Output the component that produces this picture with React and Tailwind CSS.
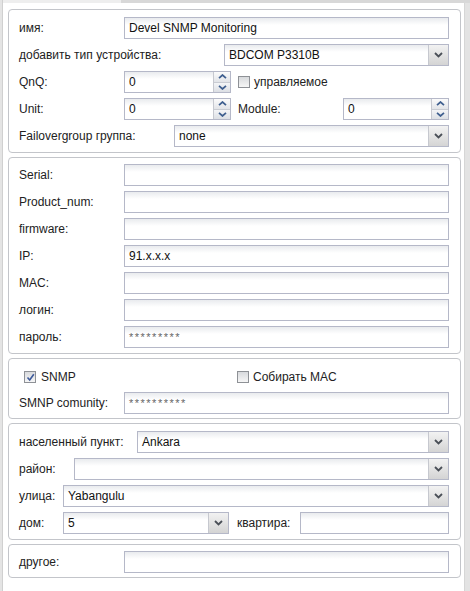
import React from "react";

const inputCls =
  "h-[22px] border border-[#b5b8c8] bg-[linear-gradient(#e9ebee,#ffffff_7px)] pl-[4px] flex items-center text-[12px] text-[#111] overflow-hidden whitespace-nowrap";

function TextBox({ value = "", className = "", pw = false }) {
  return (
    <div className={`${inputCls} ${className}`}>
      {pw ? <span className="text-[11px] tracking-[1.5px] text-[#666] leading-none">{value}</span> : value}
    </div>
  );
}

function Chevron() {
  return (
    <svg width="9" height="6" viewBox="0 0 9 6">
      <path d="M1 1 L4.5 4.5 L8 1" fill="none" stroke="#4a4f57" strokeWidth="1.8" />
    </svg>
  );
}

function Select({ value = "", className = "" }) {
  return (
    <div className={`h-[22px] border border-[#b5b8c8] flex ${className}`}>
      <div className="flex-1 bg-[linear-gradient(#e9ebee,#ffffff_7px)] pl-[4px] flex items-center text-[12px] text-[#111] whitespace-nowrap overflow-hidden">
        {value}
      </div>
      <div className="w-[20px] border-l border-[#c6c8cf] bg-[linear-gradient(#f2f2f2,#d4d4d4)] flex items-center justify-center">
        <Chevron />
      </div>
    </div>
  );
}

function Spinner({ value = "", className = "" }) {
  return (
    <div className={`h-[22px] border border-[#b5b8c8] flex ${className}`}>
      <div className="flex-1 bg-[linear-gradient(#e9ebee,#ffffff_7px)] pl-[4px] flex items-center text-[12px] text-[#111]">
        {value}
      </div>
      <div className="w-[17px] border-l border-[#c6c8cf] flex flex-col">
        <div className="flex-1 bg-[linear-gradient(#fbfbfb,#e2e4e8)] flex items-center justify-center border-b border-[#c9ccd3]">
          <svg width="9" height="5" viewBox="0 0 9 5">
            <path d="M1 4.2 L4.5 1 L8 4.2" fill="none" stroke="#3f5f8f" strokeWidth="1.7" />
          </svg>
        </div>
        <div className="flex-1 bg-[linear-gradient(#f4f5f7,#dcdfe4)] flex items-center justify-center">
          <svg width="9" height="5" viewBox="0 0 9 5">
            <path d="M1 0.8 L4.5 4 L8 0.8" fill="none" stroke="#3f5f8f" strokeWidth="1.7" />
          </svg>
        </div>
      </div>
    </div>
  );
}

function Check({ checked = false }) {
  return (
    <div className="w-[12px] h-[12px] border border-[#8e9196] bg-[linear-gradient(#d8dadd,#f6f6f6)] flex items-center justify-center">
      {checked && (
        <svg width="9" height="9" viewBox="0 0 9 9">
          <path d="M1.5 4.5 L3.7 7 L7.8 1.2" fill="none" stroke="#3d5a9a" strokeWidth="1.6" />
        </svg>
      )}
    </div>
  );
}

function Row({ children, className = "" }) {
  return <div className={`h-[22px] flex items-center ${className}`}>{children}</div>;
}

function Label({ children, w }) {
  return (
    <div className="shrink-0 whitespace-nowrap text-[12px] text-[#222]" style={{ width: w }}>
      {children}
    </div>
  );
}

function Box({ children, className = "" }) {
  return (
    <div className={`border border-[#c3c5ca] rounded-[4px] bg-white pl-[10px] pr-[11px] flex flex-col ${className}`}>
      {children}
    </div>
  );
}

export default function App() {
  return (
    <div
      className="w-[470px] h-[591px] bg-white relative overflow-hidden flex"
      style={{ fontFamily: '"Liberation Sans", Arial, sans-serif' }}
    >
      <div className="w-[3px] bg-[#e4e4e4] border-r border-[#d0d0d0] shrink-0" />
      <div className="flex-1 flex flex-col">
        <div className="h-[3px] flex shrink-0">
          <div className="w-[118px] bg-[#eeeeee]" />
          <div className="flex-1 bg-[#d8d8d8]" />
        </div>
        <div className="flex-1 flex">
          <div className="w-[5px]" />
          <div className="w-[453px] flex flex-col gap-[4px] pt-[6px]">
            <Box className="pt-[7px] pb-[5px] gap-[5px]">
              <Row>
                <Label w={105}>имя:</Label>
                <TextBox value="Devel SNMP Monitoring" className="flex-1" />
              </Row>
              <Row>
                <Label w={205}>добавить тип устройства:</Label>
                <Select value="BDCOM P3310B" className="flex-1" />
              </Row>
              <Row>
                <Label w={105}>QnQ:</Label>
                <Spinner value="0" className="w-[107px]" />
                <div className="ml-[7px]"><Check /></div>
                <span className="ml-[4px] text-[12px] text-[#222]">управляемое</span>
              </Row>
              <Row>
                <Label w={105}>Unit:</Label>
                <Spinner value="0" className="w-[107px]" />
                <div className="ml-[7px] w-[105px] text-[12px] text-[#222]">Module:</div>
                <Spinner value="0" className="flex-1" />
              </Row>
              <Row>
                <Label w={155}>Failovergroup группа:</Label>
                <Select value="none" className="flex-1" />
              </Row>
            </Box>

            <Box className="pt-[6px] pb-[5px] gap-[5px]">
              {[
                ["Serial:", ""],
                ["Product_num:", ""],
                ["firmware:", ""],
                ["IP:", "91.x.x.x"],
                ["MAC:", ""],
                ["логин:", ""],
              ].map(([l, v]) => (
                <Row key={l}>
                  <Label w={105}>{l}</Label>
                  <TextBox value={v} className="flex-1" />
                </Row>
              ))}
              <Row>
                <Label w={105}>пароль:</Label>
                <TextBox value="*********" pw className="flex-1" />
              </Row>
            </Box>

            <Box className="pt-[7px] pb-[4px] gap-[4px]">
              <Row>
                <div className="ml-[5px]"><Check checked /></div>
                <span className="ml-[5px] w-[196px] text-[12px] text-[#222]">SNMP</span>
                <Check />
                <span className="ml-[4px] text-[12px] text-[#222]">Собирать MAC</span>
              </Row>
              <Row>
                <Label w={105}>SMNP comunity:</Label>
                <TextBox value="**********" pw className="flex-1" />
              </Row>
            </Box>

            <Box className="pt-[7px] pb-[5px] gap-[5px]">
              <Row>
                <Label w={118}>населенный пункт:</Label>
                <Select value="Ankara" className="flex-1" />
              </Row>
              <Row>
                <Label w={55}>район:</Label>
                <Select value="" className="flex-1" />
              </Row>
              <Row>
                <Label w={44}>улица:</Label>
                <Select value="Yabangulu" className="flex-1" />
              </Row>
              <Row>
                <Label w={44}>дом:</Label>
                <Select value="5" className="w-[166px]" />
                <div className="ml-[8px] w-[63px] text-[12px] text-[#222]">квартира:</div>
                <TextBox value="" className="flex-1" />
              </Row>
            </Box>

            <Box className="pt-[6px] pb-[4px]">
              <Row>
                <Label w={105}>другое:</Label>
                <TextBox value="" className="flex-1" />
              </Row>
            </Box>
          </div>
          <div className="flex-1" />
          <div className="w-[6px] bg-[#e3e3e3] border-l border-[#d6d6d6]" />
        </div>
      </div>
    </div>
  );
}
